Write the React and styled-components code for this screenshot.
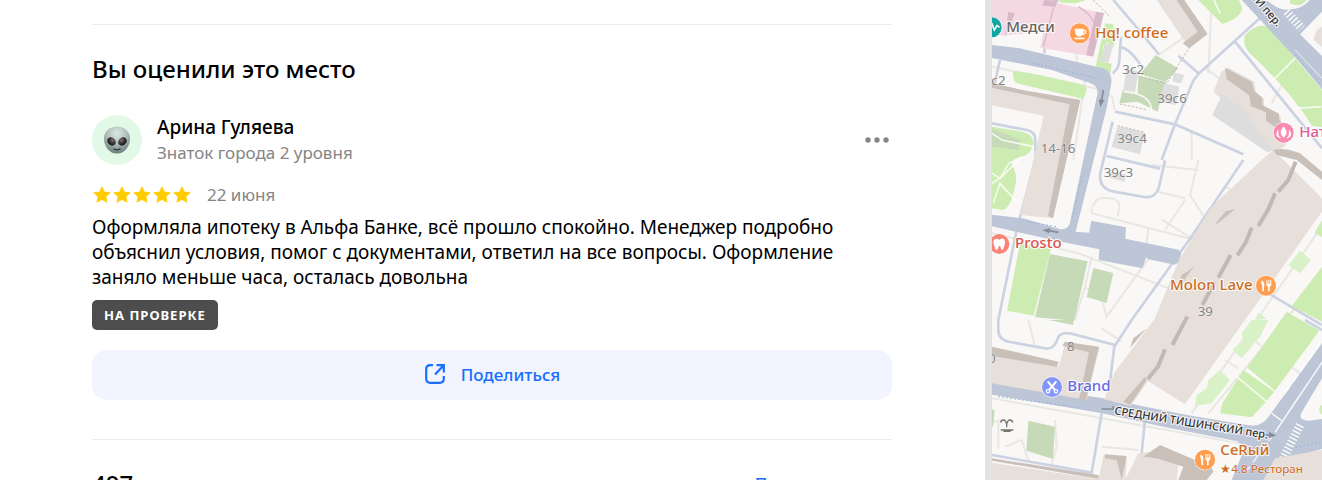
import React from 'react'
import styled, { createGlobalStyle } from 'styled-components'

// styles
const GlobalStyle = createGlobalStyle`
  * {
    box-sizing: border-box;
  }

  body {
    margin: 0;
    color: #000;
    background: #fff;
    font-family: 'Noto Sans', 'Open Sans', sans-serif;
  }

  h2, p {
    margin: 0;
    font-weight: 400;
  }

  button {
    border: 0;
    padding: 0;
    font: inherit;
    cursor: pointer;
  }
`

const Page = styled.div`
  display: grid;
  grid-template-columns: minmax(0, 1fr) 7px 330px;
  height: 100vh;
  overflow: hidden;
`

const Panel = styled.main`
  padding: 0 93px 0 92px;
  overflow: hidden;
`

const Scrollbar = styled.div`
  background: #e3e3e3;
`

const Section = styled.section`
  border-top: 1px solid #ebebeb;
  padding-top: 28px;
`

const MyReview = styled(Section)`
  margin-top: 24px;
  padding-bottom: 39px;
`

const Title = styled.h2`
  font-size: 24px;
  font-weight: 500;
  line-height: 32px;
`

const Author = styled.div`
  display: flex;
  align-items: center;
  gap: 15px;
  margin-top: 30px;
`

const Avatar = styled.div`
  display: grid;
  place-items: center;
  width: 50px;
  height: 50px;
  border-radius: 50%;
  background: #e1f9e6;
`

const AuthorInfo = styled.div`
  flex: 1;
`

const Name = styled.p`
  font-size: 19px;
  font-weight: 500;
  line-height: 25px;
`

const Muted = styled.p`
  color: #858585;
  font-size: 17px;
  line-height: 25px;
`

const MoreButton = styled.button`
  display: grid;
  place-items: center;
  width: 30px;
  height: 30px;
  background: none;
`

const Rating = styled.div`
  display: flex;
  align-items: center;
  gap: 15px;
  margin-top: 17px;
`

const Stars = styled.div`
  display: flex;
`

const Text = styled.p`
  margin-top: 8px;
  font-size: 19px;
  line-height: 25px;
`

const Status = styled.span`
  display: inline-block;
  margin-top: 10px;
  padding: 0 12px;
  border-radius: 5px;
  color: #fff;
  background: #4d4d4d;
  font-size: 13px;
  font-weight: 700;
  line-height: 30px;
  letter-spacing: 1px;
  vertical-align: top;
`

const ShareButton = styled.button`
  display: flex;
  align-items: center;
  justify-content: center;
  gap: 15px;
  width: 100%;
  height: 50px;
  margin-top: 20px;
  padding-bottom: 2px;
  border-radius: 15px;
  color: #196dff;
  background: #f2f5ff;
  font-size: 17px;
  font-weight: 500;
`

const Reviews = styled(Section)`
  display: flex;
  justify-content: space-between;
`

const SortButton = styled.button`
  display: flex;
  align-items: center;
  gap: 2px;
  height: 30px;
  color: #196dff;
  background: none;
  font-size: 17px;
  font-weight: 500;
`

const MapView = styled.aside`
  overflow: hidden;
  background: #f9f8f7;

  svg {
    display: block;
    width: 100%;
    height: 100%;
    min-height: 480px;
  }
`

const Label = styled.text`
  fill: ${(p) => p.$color || '#858585'};
  stroke: #fff;
  stroke-width: ${(p) => (p.$weight ? 7 : 4)}px;
  stroke-linejoin: round;
  stroke-opacity: ${(p) => (p.$weight ? 0.8 : 0.4)};
  paint-order: stroke;
  font-size: ${(p) => p.$size || 40}px;
  font-weight: ${(p) => p.$weight || 400};
`

const Star = () => (
  <svg width="20" height="20" viewBox="0 0 20 20" aria-hidden="true">
    <path fill="#fc0" stroke="#fc0" strokeWidth=".8" strokeLinejoin="round" d="M10 1.800l2.400 5.300 5.800.6-4.300 3.900 1.200 5.700L10 14.400l-5.100 2.900 1.200-5.700L1.800 7.700l5.800-.6z" />
  </svg>
)

const Alien = () => (
  <svg width="28" height="28" viewBox="0 0 28 28" aria-hidden="true">
    <defs>
      <radialGradient id="alien" cx=".5" cy=".25" r=".75">
        <stop offset="0" stopColor="#dfe8e6" />
        <stop offset=".5" stopColor="#b0c0bd" />
        <stop offset="1" stopColor="#677b78" />
      </radialGradient>
      <radialGradient id="eye" cx=".5" cy=".3" r=".7">
        <stop offset="0" stopColor="#77716f" />
        <stop offset=".6" stopColor="#302b2a" />
        <stop offset="1" stopColor="#191615" />
      </radialGradient>
    </defs>
    <path fill="url(#alien)" d="M14 .5C6.500.500 1 5.500 1 12.500c0 7 4.500 15 13 15s13-8 13-15C27 5.500 21.500.500 14 .5z" />
    <ellipse fill="url(#eye)" cx="8.500" cy="15.500" rx="4.600" ry="3.800" transform="rotate(42 8.500 15.500)" />
    <ellipse fill="url(#eye)" cx="19.500" cy="15.500" rx="4.600" ry="3.800" transform="rotate(-42 19.500 15.500)" />
    <path fill="none" stroke="#2b3836" strokeWidth="1.200" strokeLinecap="round" d="M10.800 22.800q3.200 2.200 6.400 0" />
  </svg>
)

const ShareIcon = () => (
  <svg width="22" height="22" viewBox="0 0 22 22" fill="none" stroke="#196dff" strokeWidth="2.200" aria-hidden="true">
    <path d="M9 2.200H6.500Q2.200 2.200 2.200 6.500v9Q2.200 19.800 6.500 19.800h9q4.300 0 4.300-4.300V13" />
    <path d="M11 11.500l8.500-9M12.500 2.200h7.300v7.300" />
  </svg>
)

const Chevron = () => (
  <svg width="10" height="8" viewBox="0 0 10 8" fill="none" stroke="#196dff" strokeWidth="2" aria-hidden="true">
    <path d="M1 2l4 4 4-4" />
  </svg>
)

const Dots = () => (
  <svg width="24" height="6" viewBox="0 0 24 6" fill="#858585" aria-hidden="true">
    <circle cx="3" cy="3" r="2.700" />
    <circle cx="12" cy="3" r="2.700" />
    <circle cx="21" cy="3" r="2.700" />
  </svg>
)

const Fork = () => (
  <g fill="#fff">
    <path d="M-13-16q9 4 8 19h-1v14h-5V3q-6-9-2-19z" />
    <path d="M1-17h3v11h3v-11h3v11h3v-11h3v14q-1 5-5 6v14H6V3Q2 2 1-3z" />
  </g>
)

const Pin = ({ x, y, color, children }) => (
  <g transform={`translate(${x} ${y})`}>
    <circle r="32" fill="#fff" opacity=".7" />
    <circle r="30" fill={color} />
    {children}
  </g>
)

const CityMap = () => (
  <svg viewBox="21 0 990 1440" preserveAspectRatio="xMinYMin slice" role="img" aria-label="Карта">
    {/* footpaths */}
    <g fill="none" stroke="#e9e7e4" strokeWidth="6">
      <path d="M21 200l310 65 50 25 8 40M680 0l-10 220M520 165l80-55M21 700l260 60 270 105M21 1195l330 60 440 80M500 495l140 15M640 480l-25 105 45 70 40 20M520 575l80 20M600 600l-60 90M530 658l90 57M620 1240l390-560M670 1240l330-400M660 205l60 40M300 860l-30 100M320 770l-20 90 50 40 15 50 130-180M720 560l60 30M150 1040l-20-80M350 985l60 40M60 1340l50-20 20 60M210 1260l5 80-20 70M300 240l-35 240M275 155v45M490 685l-10 80M620 395v85M680 1270l-15 30M950 110l30 80" />
      <path d="M325 620q5-25 30-27l30 3q20 8 18 25l-5 28M320 620v20l290 75" />
      <path d="M21 1265l40-5M40 1265v80M350 1340l110 10M790 1010l170 120M720 1080l40 25M860 310l50-90" />
    </g>
    <g fill="none" stroke="#cbd2e1" strokeWidth="8" strokeLinejoin="round">
      <path d="M385 0l75 88 62 75M408 110l-5 70q0 25-20 40M405 142q25 0 60 50M45 180l-25 110M183 60l-5 100M580 167l62 54M835 45L640 222l-15 20-55 130-40 108M390 335l180 38 205 90M750 125l261 320M383 365l-36 150q-10 50 40 60l90 16q35 5 45-30l18-80M365 468l160 38M21 370l105 20q25 5 25 30v60L95 690 40 960v30q0 30 35 36l110 20q25 0 35-35 10-16 40-10l130 34M775 480L618 712 440 960l-52 80-20 160M615 710l100 70M850 880l161 95M960 960l51 30M350 1240l-30 178L21 1365M480 1260l-10 100" />
      <path d="M215 0v25" />
    </g>
    {/* parks and lawns */}
    <g fill="#cdecb1">
      <path d="M85 215q10-8 210 40 20 5 0 42L105 252q-25-5-20-37z" />
      <path d="M21 380l90 15q30 5 35 30-5 40-40 45l-30 15q20 30 17 60-15 80-40 85l-32-5zM218 0h85l-30 10-45-2z" />
      <path d="M640 0h122l10 25q-5 30-60 47z" />
      <path d="M780 105q50-50 85-10l146 175v112l-30-5q-70-110-190-220-20-30-11-52zM915 0h50q-20 25-50 10z" />
      <path d="M360 70l25 3-5 38-26 30v45l26 5-3 30-47-13zM380 82l18 3-12 55-18-10z" />
      <path d="M105 730l93 17-52 200-80-15zM988 700l23-40v50zM1011 1215q-18 10 0 30z" />
      <path d="M920 918l91-118v165zM905 935l98 57-133 180-83-69zM775 1110l93 65-23 28-45 49-95-12 7-30z" />
    </g>
    <g fill="#d9f1c6">
      <path d="M945 752l33 28-33 40-35-25zM800 960h50l-25 50-55 65-28-25 33-30-5-20zM705 1110l30 30-55 70-50 7 5-32 30-20 5-25zM820 938l25 18-35 4z" />
    </g>
    <g fill="#c6dab8">
      <path d="M512 165l68 40-38 40-77-22zM460 228l80 17-22 90-60-30-55 5 10-40 45 10zM195 762l113 22-40 178-118-10zM325 804l60 15-20 90-60-18zM130 1262l80 18-6 97-80-25zM190 960h75v15zM21 385l85 35-5 30-80-10zM21 1228l8 2-5 50h-3z" />
    </g>
    <g fill="none" stroke="#fff" strokeWidth="5" opacity=".8">
      <path d="M21 400l30 20 95 20M21 550l30-20 60-60M25 610l20-60 50 55M75 485l-30 50-24-15M860 245l70-70M930 325l80-5M755 1130l90 75M687 0l18 40M415 275q85 5 85 60" />
    </g>
    {/* hospital */}
    <path fill="#f4d9e3" d="M21 0h155l180 40-30 130-160-27 10-50-125 15-30-15z" />
    <path fill="#c8a8ba" opacity=".65" d="M178 0h38l-5 22-40-6zM333 35l24 4-33 130-20-3zM70 35l20 5-30 70z" />
    <path fill="none" stroke="#d9b7c9" strokeWidth="4" d="M205 25l-30 115M280 20q50 30 50 65t-45 40" />
    {/* roads */}
    <g fill="#bdc6d6">
      <path d="M21 135l80 9 240 58q42 5 38 48l-14 75-93 370 40 3 7-36 104 20-2 34 160 33 7 10-3 25-15 10-80-16-7-6-10 33-132-25 2-32-125-25-197-44v-35l100 12 105 32q28 2 31-30l80-375q5-27-25-35L200 210 21 174z" />
      <path d="M770 0h75q40 35 70 28 35 0 60-28h36v35l-66 68 66 65v100l-75-90zM21 1148l330 46 250 50 200 33q30 0 50-27l160-220v105l-60 100q-15 25 20 27l40-5v90l-92 25-49 68H740l38-94-20-22-220-43-190-42-327-55z" />
    </g>
    <g fill="none" stroke="#fff">
      <path strokeWidth="4" d="M860 1240l30 22M870 1297l141-210" />
      <path strokeWidth="3" opacity=".7" d="M930 150l81 85" />
      <path strokeWidth="5" strokeDasharray="25 15" opacity=".7" d="M780 1420l80-110M900 1180l111-160" />
      <path strokeWidth="26" strokeDasharray="4 7" d="M905 35l45 50M945 1275l-50 100" />
    </g>
    <path fill="none" stroke="#96addd" strokeWidth="3" strokeDasharray="5 7" d="M145 190l190 45M930 165l81 90M290 530l-30 130M125 665l90 15M40 1190l260 35M920 1345l90-20" />
    {/* buildings */}
    <g fill="#e7dfda">
      <path d="M21 250l90 20 175 30-82 355-98-10 70-298-176-35zM515 0l95 140 55-38L595 0zM730 203l78 42 5 32 24 20 0 25 50 25v20l35 35-25 38q-30 20-55 10L712 300l-27-25 25-60z" />
      <path d="M830 480l35-30 146 145v40L600 1213l-112-70-50 75-80-20 30-80 120-160 75-180 95-155 20-20zM21 1040l200 60 20-70 102 15-38 155-284-50zM21 1388l320 50 15-75 70 15-5 62H21zM500 1355l80 40-5 45H420l40-80zM870 1375l141-25v90H835z" />
      <path d="M995 90l16-10v60l-26-20z" />
    </g>
    <path fill="#dddddd" d="M712 282l70 50 35 60 45 60-15 5-165-112z" />
    <g fill="#c9c0ba">
      <path d="M21 250l90 20 175 30-82 355-15-7 65-335-140-30-93-20zM575 0h23l70 102-55 43-20-15 45-35zM720 203l80 42 8 28 24 20v22l50 26v18l16 15-10 20-45-32 0-25-45-18-5-33-68-48zM625 800l-50 75 20-40zM21 1040l200 45-5 15-195-32zM240 1025l102 15-40 162-20-5 30-140-80-20zM21 1382l320 55v-12L21 1375zM360 1363l65 5-15 72-15-60-35-5z" />
      <path d="M865 450q30-10 80 10l66 55v25l-76-60-60-15zM475 1370l50-35 105 45 45 10 10 25-20 25H580l15-40-80-25zM485 1140l-50 75-20-10 65-75zM750 628l-55 45-2-5 30-35zM630 800l-50 50 10-25zM485 985l-50 60 10-30z" />
    </g>
    <path fill="none" stroke="#c2b9b3" strokeWidth="12" d="M932 485l-22 55-30 35M870 580l-20 48-30 50M800 683l-18 45-25 38M737 765l-37 68M690 845l-38 70M607 950l-45 85M540 1048l-20 50-32 40" />
    <g fill="#dedede">
      <path d="M360 130l25 5-15 53-25-5zM425 205l35 10-10 62-35-8zM565 217l33 8-10 25-25-5zM538 250l45 10-10 55-48-10zM398 378l82 20-15 65-85-22zM370 515l52 8-3 22-45-12z" />
    </g>
    <g fill="none" stroke="#c7b7ad" strokeWidth="3" strokeDasharray="7 5">
      <path d="M325 0l50 50M615 140l-70 110-85-22M405 312l80 17M398 377l82 20" />
    </g>
    {/* direction arrows */}
    <path fill="none" stroke="#868d99" strokeWidth="5" d="M355 270l-6 35M220 697l-30-6M350 1227h34v-8M835 1305h20" />
    <path fill="#868d99" d="M341 298l17 3-12 20zM172 690l24-6-4 16zM852 1296l22 10-22 8z" />
    {/* house numbers */}
    <Label x="412" y="222">3с2</Label>
    <Label x="19" y="255">с2</Label>
    <Label x="517" y="309">39с6</Label>
    <Label x="397" y="429">39с4</Label>
    <Label x="356" y="531">39с3</Label>
    <Label x="167" y="459">14-16</Label>
    <Label x="638" y="948">39</Label>
    <Label x="246" y="1053">8</Label>
    <Label x="9" y="1090">0</Label>
    {/* places */}
    <Pin x={20} y={82} color="#11a6a3">
      <path fill="none" stroke="#fff" strokeWidth="5" d="M-15 0h8l8-10 7 18 8-13 8 5" />
    </Pin>
    <Label x="64" y="95" $size={45} $weight={500} $color="#666">Медси</Label>
    <Pin x={284} y={100} color="#ff9d50">
      <path fill="#fff" d="M-15-14h27v3q10-1 8 8-2 8-12 8-4 5-9 5-13 0-14-24zM12-7v8q5 0 4-8zM-15 13h29v5h-29z" />
    </Pin>
    <Label x="331" y="113" $size={45} $weight={500} $color="#ce6b1c">Hq! coffee</Label>
    <Pin x={896} y={398} color="#f98bb2">
      <path fill="#fff" d="M0-19q9 10 9 18 0 10-9 16-9-6-9-16 0-8 9-18zM-15-10q-5 20 8 27-12-1-15-10-1-10 7-17zM15-10q5 20-8 27 12-1 15-10 1-10-7-17z" />
    </Pin>
    <Label x="943" y="412" $size={45} $weight={500} $color="#de5d92">Натали</Label>
    <Pin x={43} y={732} color="#f98579">
      <path fill="#fff" d="M0-13q15-9 17 6 0 10-6 23-5 6-7-6-4-10-7 0-4 13-9 4-6-12-6-22 3-12 18-5z" />
    </Pin>
    <Label x="90" y="745" $size={45} $weight={500} $color="#d95551">Prosto</Label>
    <Pin x={843} y={857} color="#ff9d50"><Fork /></Pin>
    <Label x="555" y="869" $size={45} $weight={500} $color="#ce6b1c">Molon Lave</Label>
    <Pin x={201} y={1161} color="#8495fc">
      <g fill="none" stroke="#fff" strokeWidth="4">
        <path d="M-13-17L9 9M13-17L-9 9" strokeWidth="6" />
        <circle cx="-12" cy="13" r="5" />
        <circle cx="12" cy="13" r="5" />
      </g>
    </Pin>
    <Label x="247" y="1173" $size={45} $weight={500} $color="#646be4">Brand</Label>
    <Pin x={660} y={1379} color="#ff9d50"><Fork /></Pin>
    <Label x="706" y="1364" $size={45} $weight={500} $color="#ce6b1c">СеRый</Label>
    <Label x="706" y="1418" $size={35} $color="#ce6b1c">★4.8 Ресторан</Label>
    {/* fountain */}
    <path fill="none" stroke="#77736e" strokeWidth="4" d="M65 1282v-10q-3-12-10-12t-8 8M65 1272q3-12 10-12t8 8M47 1290h38M55 1294h22" />
    {/* streets */}
    <Label transform="translate(387 1243) rotate(9)" $size={33} $weight={500} $color="#333">СРЕДНИЙ ТИШИНСКИЙ пер.</Label>
    <Label transform="translate(876 82) rotate(49)" textAnchor="end" $size={33} $weight={500} $color="#333">ИЙ пер.</Label>
  </svg>
)

const App = () => {
  return (
    <>
      <GlobalStyle />
      <Page>
        <Panel>
          <MyReview>
            <Title>Вы оценили это место</Title>
            <Author>
              <Avatar><Alien /></Avatar>
              <AuthorInfo>
                <Name>Арина Гуляева</Name>
                <Muted>Знаток города 2 уровня</Muted>
              </AuthorInfo>
              <MoreButton aria-label="Ещё"><Dots /></MoreButton>
            </Author>
            <Rating>
              <Stars role="img" aria-label="Оценка 5 из 5">
                {[1, 2, 3, 4, 5].map((n) => <Star key={n} />)}
              </Stars>
              <Muted>22 июня</Muted>
            </Rating>
            <Text>
              Оформляла ипотеку в Альфа Банке, всё прошло спокойно. Менеджер подробно
              объяснил условия, помог с документами, ответил на все вопросы. Оформление
              заняло меньше часа, осталась довольна
            </Text>
            <Status>НА ПРОВЕРКЕ</Status>
            <ShareButton><ShareIcon />Поделиться</ShareButton>
          </MyReview>
          <Reviews>
            <Title>497 отзывов</Title>
            <SortButton>По умолчанию<Chevron /></SortButton>
          </Reviews>
        </Panel>
        <Scrollbar />
        <MapView><CityMap /></MapView>
      </Page>
    </>
  )
}

export default App
